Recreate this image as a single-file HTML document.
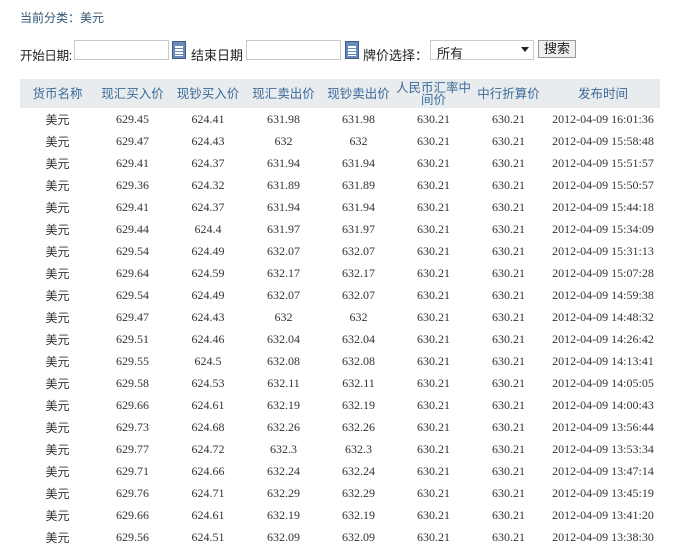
<!DOCTYPE html>
<html><head><meta charset="utf-8"><style>
body{margin:0;background:#fff;font-family:"Liberation Sans","Noto Sans CJK SC",sans-serif;font-size:12px;color:#222;width:682px;height:550px;overflow:hidden;position:relative}
.a{position:absolute}
input.t{position:absolute;height:20px;border:1px solid #c8c8c8;box-sizing:border-box;background:#fff}
.cal{position:absolute;width:14px;height:18px;border:1px solid #3a5a8a;background:#6a8ab8;box-sizing:border-box}
.cal:after{content:"";position:absolute;left:2px;top:4px;width:8px;height:10px;background:repeating-linear-gradient(#fff 0 2px,#6a8ab8 2px 3px)}
table{position:absolute;left:20px;top:79px;border-collapse:collapse;width:640px}
th{background:#e9ecee;color:#3a6a9a;font-weight:normal;height:29px;font-size:12.5px;line-height:12px;padding:0}
td{height:22px;text-align:center;padding:0;font-family:"Liberation Serif","Noto Sans CJK SC",serif;font-size:12px;color:#333}
td:first-child{font-family:"Liberation Sans","Noto Sans CJK SC",sans-serif}
</style></head><body>
<div class="a" style="left:20px;top:9px;color:#335577">当前分类：美元</div>
<div class="a" style="left:20px;top:45px;font-size:12.5px;letter-spacing:-0.3px">开始日期:</div>
<input class="t" style="left:74px;top:40px;width:95px">
<div class="cal" style="left:172px;top:41px"></div>
<div class="a" style="left:191px;top:45px;font-size:13px">结束日期</div>
<input class="t" style="left:246px;top:40px;width:95px">
<div class="cal" style="left:345px;top:41px"></div>
<div class="a" style="left:363px;top:45px;font-size:13px">牌价选择：</div>
<div class="a" style="left:430px;top:40px;width:104px;height:20px;border:1px solid #ccc;box-sizing:border-box;font-size:13px;padding:2px 0 0 6px">所有<span class="a" style="right:4px;top:6px;border:4px solid transparent;border-top:5px solid #222"></span></div>
<div class="a" style="left:538px;top:40px;width:38px;height:18px;border:1px solid #999;background:#f0f0f0;box-sizing:border-box;font-size:13px;text-align:center;line-height:16px">搜索</div>
<table>
<tr><th style="width:75px">货币名称</th><th style="width:75px">现汇买入价</th><th style="width:76px">现钞买入价</th><th style="width:75px">现汇卖出价</th><th style="width:75px">现钞卖出价</th><th style="width:75px">人民币汇率中<br>间价</th><th style="width:75px">中行折算价</th><th>发布时间</th></tr>
<tr><td>美元</td><td>629.45</td><td>624.41</td><td>631.98</td><td>631.98</td><td>630.21</td><td>630.21</td><td>2012-04-09 16:01:36</td></tr>
<tr><td>美元</td><td>629.47</td><td>624.43</td><td>632</td><td>632</td><td>630.21</td><td>630.21</td><td>2012-04-09 15:58:48</td></tr>
<tr><td>美元</td><td>629.41</td><td>624.37</td><td>631.94</td><td>631.94</td><td>630.21</td><td>630.21</td><td>2012-04-09 15:51:57</td></tr>
<tr><td>美元</td><td>629.36</td><td>624.32</td><td>631.89</td><td>631.89</td><td>630.21</td><td>630.21</td><td>2012-04-09 15:50:57</td></tr>
<tr><td>美元</td><td>629.41</td><td>624.37</td><td>631.94</td><td>631.94</td><td>630.21</td><td>630.21</td><td>2012-04-09 15:44:18</td></tr>
<tr><td>美元</td><td>629.44</td><td>624.4</td><td>631.97</td><td>631.97</td><td>630.21</td><td>630.21</td><td>2012-04-09 15:34:09</td></tr>
<tr><td>美元</td><td>629.54</td><td>624.49</td><td>632.07</td><td>632.07</td><td>630.21</td><td>630.21</td><td>2012-04-09 15:31:13</td></tr>
<tr><td>美元</td><td>629.64</td><td>624.59</td><td>632.17</td><td>632.17</td><td>630.21</td><td>630.21</td><td>2012-04-09 15:07:28</td></tr>
<tr><td>美元</td><td>629.54</td><td>624.49</td><td>632.07</td><td>632.07</td><td>630.21</td><td>630.21</td><td>2012-04-09 14:59:38</td></tr>
<tr><td>美元</td><td>629.47</td><td>624.43</td><td>632</td><td>632</td><td>630.21</td><td>630.21</td><td>2012-04-09 14:48:32</td></tr>
<tr><td>美元</td><td>629.51</td><td>624.46</td><td>632.04</td><td>632.04</td><td>630.21</td><td>630.21</td><td>2012-04-09 14:26:42</td></tr>
<tr><td>美元</td><td>629.55</td><td>624.5</td><td>632.08</td><td>632.08</td><td>630.21</td><td>630.21</td><td>2012-04-09 14:13:41</td></tr>
<tr><td>美元</td><td>629.58</td><td>624.53</td><td>632.11</td><td>632.11</td><td>630.21</td><td>630.21</td><td>2012-04-09 14:05:05</td></tr>
<tr><td>美元</td><td>629.66</td><td>624.61</td><td>632.19</td><td>632.19</td><td>630.21</td><td>630.21</td><td>2012-04-09 14:00:43</td></tr>
<tr><td>美元</td><td>629.73</td><td>624.68</td><td>632.26</td><td>632.26</td><td>630.21</td><td>630.21</td><td>2012-04-09 13:56:44</td></tr>
<tr><td>美元</td><td>629.77</td><td>624.72</td><td>632.3</td><td>632.3</td><td>630.21</td><td>630.21</td><td>2012-04-09 13:53:34</td></tr>
<tr><td>美元</td><td>629.71</td><td>624.66</td><td>632.24</td><td>632.24</td><td>630.21</td><td>630.21</td><td>2012-04-09 13:47:14</td></tr>
<tr><td>美元</td><td>629.76</td><td>624.71</td><td>632.29</td><td>632.29</td><td>630.21</td><td>630.21</td><td>2012-04-09 13:45:19</td></tr>
<tr><td>美元</td><td>629.66</td><td>624.61</td><td>632.19</td><td>632.19</td><td>630.21</td><td>630.21</td><td>2012-04-09 13:41:20</td></tr>
<tr><td>美元</td><td>629.56</td><td>624.51</td><td>632.09</td><td>632.09</td><td>630.21</td><td>630.21</td><td>2012-04-09 13:38:30</td></tr>
</table>
</body></html>
